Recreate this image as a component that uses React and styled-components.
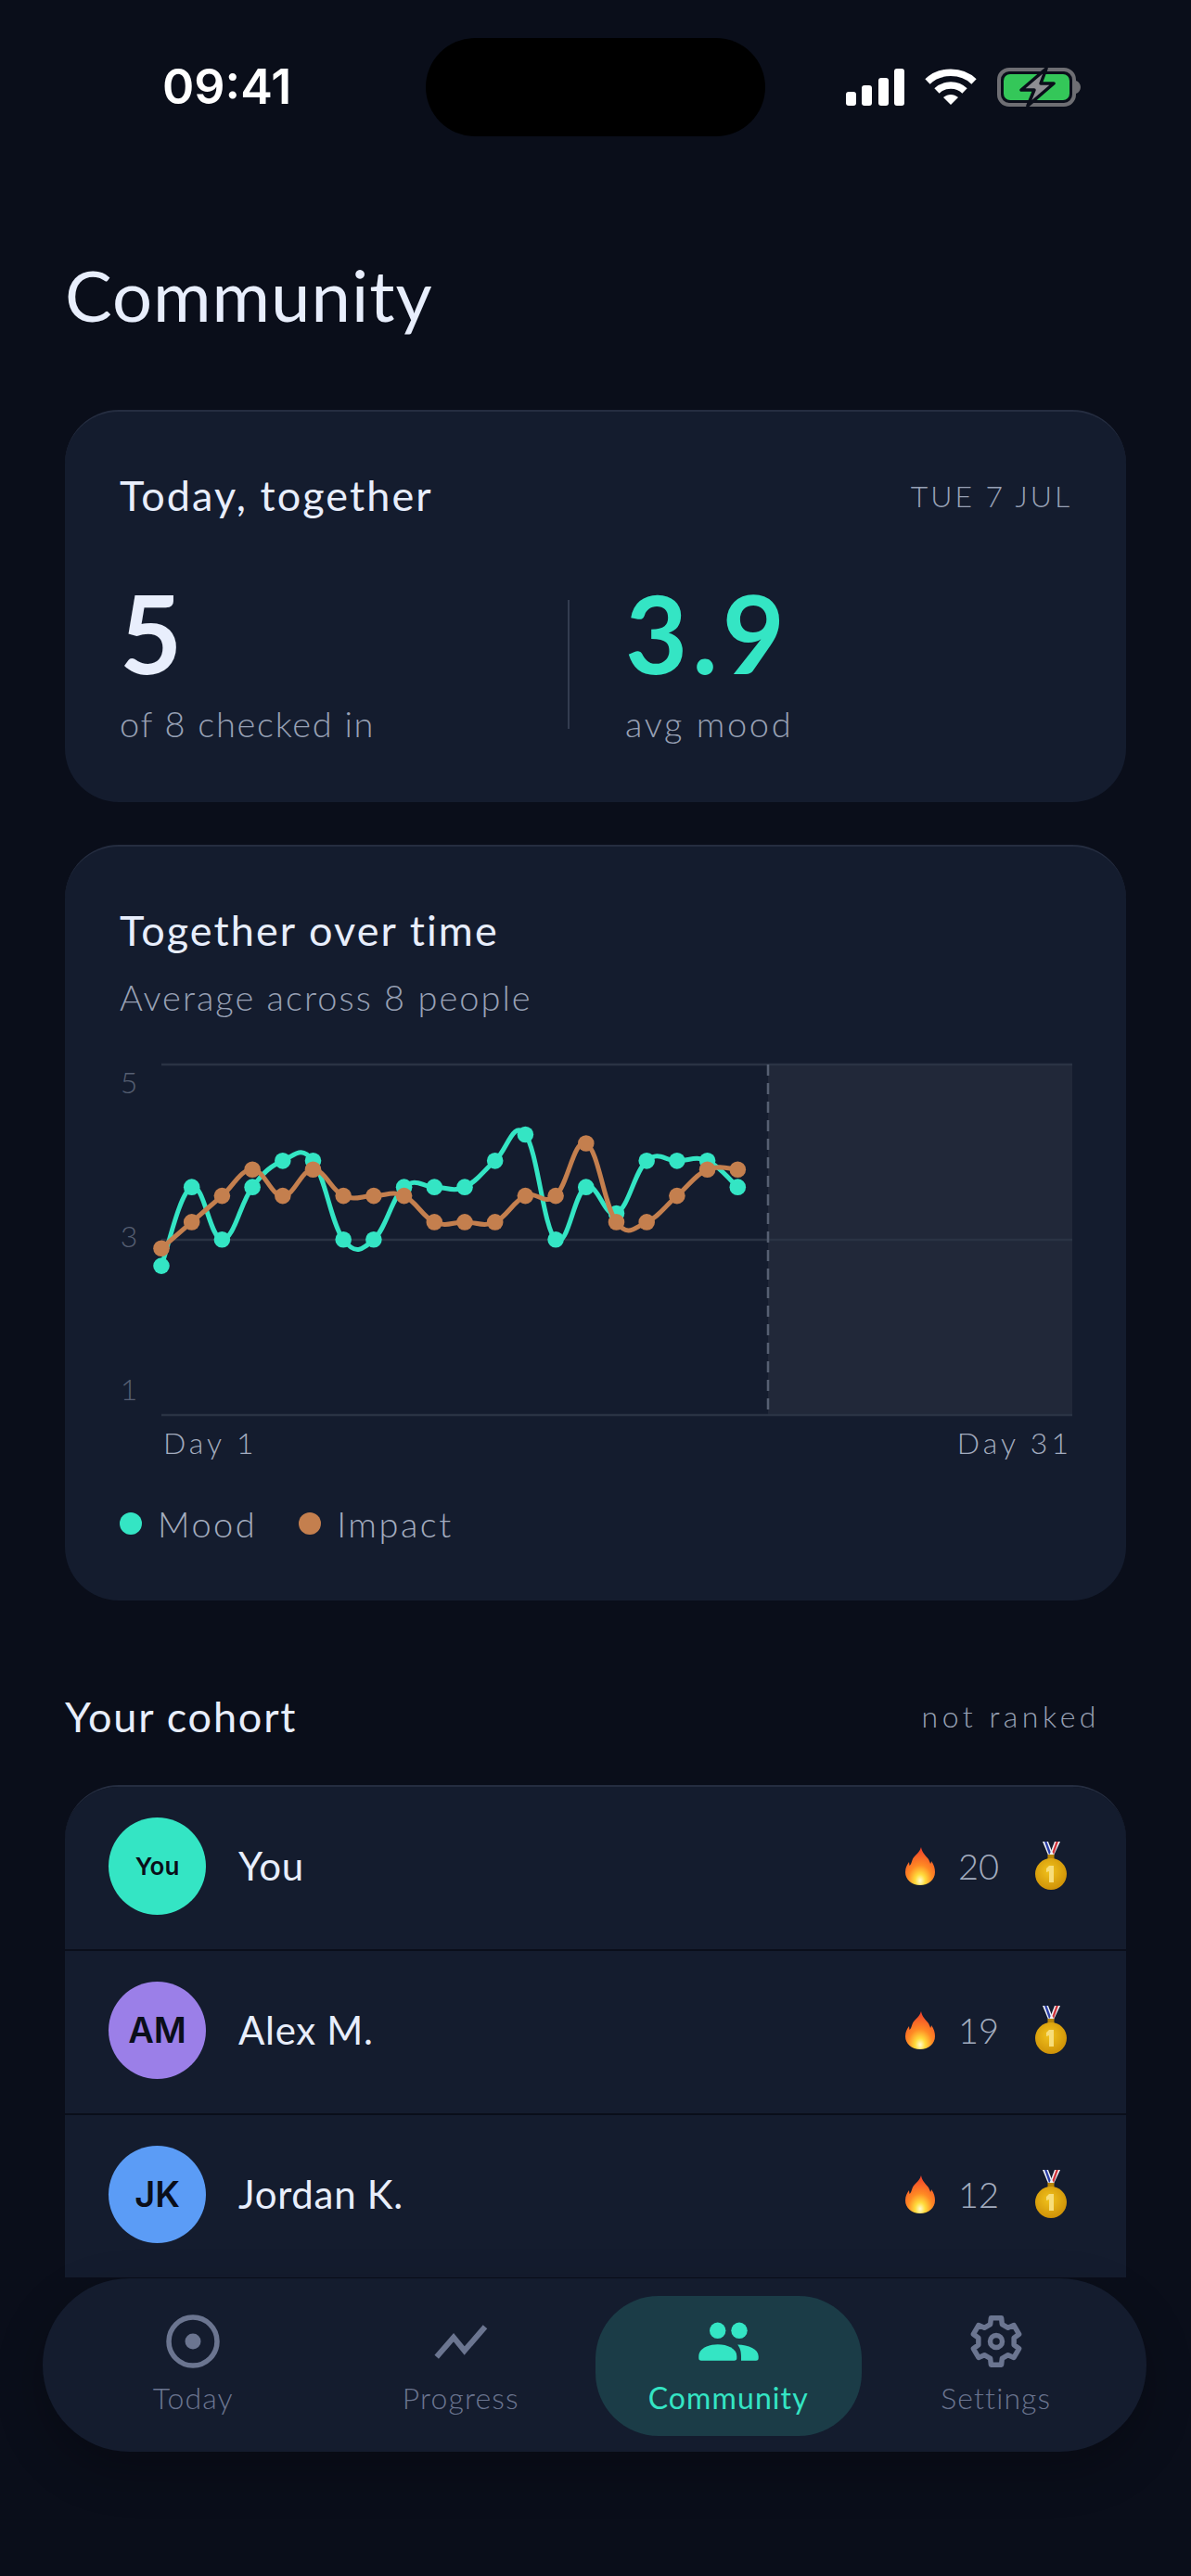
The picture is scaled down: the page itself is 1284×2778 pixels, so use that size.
import styled, { createGlobalStyle } from "styled-components";

const Global = createGlobalStyle`
  html, body { margin: 0; padding: 0; background: #0a0e1a; }
  * { box-sizing: border-box; }
`;

const TEAL = "#34e5c4";
const ORANGE = "#c47f4e";

const mood = [2.7, 3.6, 3.0, 3.6, 3.9, 3.9, 3.0, 3.0, 3.6, 3.6, 3.6, 3.9, 4.2, 3.0, 3.6, 3.3, 3.9, 3.9, 3.9, 3.6];
const impact = [2.9, 3.2, 3.5, 3.8, 3.5, 3.8, 3.5, 3.5, 3.5, 3.2, 3.2, 3.2, 3.5, 3.5, 4.1, 3.2, 3.2, 3.5, 3.8, 3.8];

const cohort = [
  { name: "You", initials: "You", color: TEAL, streak: 20, small: true },
  { name: "Alex M.", initials: "AM", color: "#9b7fe8", streak: 19 },
  { name: "Jordan K.", initials: "JK", color: "#5b9cf6", streak: 12 },
];

const px = (i) => 46 + i * 32.7;
const py = (v) => 4 + (5 - v) * 94.4;

// catmull-rom through the points, same feel as the chart lib
function linePath(values) {
  const pts = values.map((v, i) => [px(i), py(v)]);
  const k = 0.2;
  let d = `M${pts[0][0]} ${pts[0][1]}`;
  for (let i = 0; i < pts.length - 1; i++) {
    const p0 = pts[i - 1] || pts[i];
    const p1 = pts[i];
    const p2 = pts[i + 1];
    const p3 = pts[i + 2] || p2;
    const c1x = p1[0] + (p2[0] - p0[0]) * k;
    const c1y = p1[1] + (p2[1] - p0[1]) * k;
    const c2x = p2[0] - (p3[0] - p1[0]) * k;
    const c2y = p2[1] - (p3[1] - p1[1]) * k;
    d += ` C${c1x} ${c1y} ${c2x} ${c2y} ${p2[0]} ${p2[1]}`;
  }
  return d;
}

// six flat teeth, one pointing straight up
function gearPath() {
  const at = (r, deg) => {
    const a = (deg * Math.PI) / 180;
    return `${(29 + r * Math.cos(a)).toFixed(2)} ${(29 + r * Math.sin(a)).toFixed(2)}`;
  };
  let d = "";
  for (let k = 0; k < 6; k++) {
    const a = -90 + k * 60;
    d += `${k ? "L" : "M"}${at(19.5, a - 19)} L${at(25.8, a - 12.5)} L${at(25.8, a + 12.5)} L${at(19.5, a + 19)} `;
  }
  return d + "Z";
}

function Series({ values, color }) {
  return (
    <g>
      <path d={linePath(values)} fill="none" stroke={color} strokeWidth="5" />
      {values.map((v, i) => (
        <circle key={i} cx={px(i)} cy={py(v)} r="8.8" fill={color} />
      ))}
    </g>
  );
}

function Chart() {
  return (
    <ChartSvg width="1028" height="450" viewBox="0 0 1028 450">
      <rect x="700" y="4" width="328" height="377" fill="#212839" />
      <line x1="46" x2="1028" y1="4" y2="4" stroke="#2a3344" strokeWidth="2.5" />
      <line x1="46" x2="1028" y1="193" y2="193" stroke="#2a3344" strokeWidth="2.5" />
      <line x1="46" x2="1028" y1="382" y2="382" stroke="#2a3344" strokeWidth="2.5" />
      <line x1="700" x2="700" y1="4" y2="382" stroke="#565f72" strokeWidth="2.5" strokeDasharray="12 8" />
      <Series values={mood} color={TEAL} />
      <Series values={impact} color={ORANGE} />
      <AxisText x="11" y="35">5</AxisText>
      <AxisText x="11" y="201">3</AxisText>
      <AxisText x="11" y="366">1</AxisText>
      <DayText x="48" y="424">Day 1</DayText>
      <DayText x="1028" y="424" textAnchor="end">Day 31</DayText>
    </ChartSvg>
  );
}

function Flame() {
  return (
    <svg width="32" height="41" viewBox="0 0 32 41">
      <defs>
        <radialGradient id="flameFill" cx="0.5" cy="0.88" r="0.85">
          <stop offset="0" stopColor="#fffbd0" />
          <stop offset="0.2" stopColor="#ffdc3c" />
          <stop offset="0.48" stopColor="#ff8a24" />
          <stop offset="1" stopColor="#f0402a" />
        </radialGradient>
      </defs>
      <path
        d="M17 0c1 6 5 9 8 13 1 2 2 4 2 5 1-1 1-3 1-3 3 4 4 8 4 12 0 8-7 14-16 14S0 35 0 27c0-5 2-8 4-11l.5 4c1.500-1 2-3 3-6C9 9 15 7 17 0z"
        fill="url(#flameFill)"
      />
    </svg>
  );
}

function Medal() {
  return (
    <svg width="34" height="52" viewBox="0 0 34 52">
      <defs>
        <radialGradient id="medalFill" cx="0.45" cy="0.4" r="0.7">
          <stop offset="0" stopColor="#f2c31d" />
          <stop offset="1" stopColor="#c98a04" />
        </radialGradient>
      </defs>
      <path d="M8 0h6l5 13-4 4z" fill="#f1f3f8" />
      <path d="M10 0h2.500l4.500 12-2 2z" fill="#2b3fa6" />
      <path d="M27 0h-6l-5 13 3 4z" fill="#f1f3f8" />
      <path d="M25 0h-2.500l-4 11 1.500 3z" fill="#d0343a" />
      <rect x="13.500" y="14" width="7" height="5" fill="#b98608" />
      <circle cx="17" cy="35" r="17" fill="url(#medalFill)" />
      <path d="M15 26h5v18h-5V32l-3 1v-4z" fill="#f7dd7a" />
    </svg>
  );
}

function StatusIcons() {
  return (
    <StatusRight>
      <svg width="63" height="40" viewBox="0 0 63 40" fill="#fff">
        <rect x="0" y="25" width="11" height="15" rx="3" />
        <rect x="17" y="18" width="11" height="22" rx="3" />
        <rect x="35" y="10" width="11" height="30" rx="3" />
        <rect x="52" y="0" width="11" height="40" rx="3" />
      </svg>
      <svg width="56" height="40" viewBox="0 0 56 40" fill="none" stroke="#fff" strokeWidth="7.500">
        <path d="M3 14 C16 1 40 1 53 14" />
        <path d="M13 24 C21 16 35 16 43 24" />
        <path d="M20 31 L28 39 L36 31 C31 27 25 27 20 31Z" fill="#fff" stroke="none" />
      </svg>
      <svg width="90" height="42" viewBox="0 0 90 42">
        <rect x="2" y="2" width="81" height="38" rx="11" fill="none" stroke="#6e6e73" strokeWidth="4" />
        <rect x="7" y="7" width="71" height="28" rx="7" fill="#34c759" />
        <path d="M85 14c3 1 5 4 5 7s-2 6-5 7z" fill="#6e6e73" />
        <path d="M53 1 L26 24 H40 L33 41 L61 17 H47 Z" fill="#8e8e93" stroke="#0a0e1a" strokeWidth="3.500" strokeLinejoin="round" />
      </svg>
    </StatusRight>
  );
}

const navItems = [
  {
    label: "Today",
    icon: (
      <svg width="58" height="58" viewBox="0 0 58 58">
        <circle cx="29" cy="29" r="26" fill="none" stroke="currentColor" strokeWidth="5.500" />
        <circle cx="29" cy="29" r="8.500" fill="currentColor" />
      </svg>
    ),
  },
  {
    label: "Progress",
    icon: (
      <svg width="58" height="58" viewBox="0 0 58 58">
        <path d="M2.700 45.700 L21 24.700 L32.700 39 L55 13.300" fill="none" stroke="currentColor" strokeWidth="6" />
      </svg>
    ),
  },
  {
    label: "Community",
    active: true,
    icon: (
      <svg width="65" height="58" viewBox="0 0 65 58" fill="currentColor">
        <circle cx="20.700" cy="17.300" r="8.700" />
        <circle cx="44" cy="17.300" r="8.700" />
        <path d="M3 49.700 Q.3 49.700 .3 47 V45 C.3 37 10 32.300 20.800 32.300 C31.500 32.300 41.300 37 41.300 45 V47 Q41.300 49.700 38.600 49.700 Z" />
        <path d="M42.200 32.400 C54 32.600 64.700 37 64.700 45 V47 Q64.700 49.700 62 49.700 H46 V45 C46 39 44.500 35.500 42.200 32.400 Z" />
      </svg>
    ),
  },
  {
    label: "Settings",
    icon: (
      <svg width="58" height="58" viewBox="0 0 58 58" fill="none" stroke="currentColor" strokeWidth="5.500" strokeLinejoin="round">
        <path d={gearPath()} />
        <circle cx="29" cy="29" r="6.500" />
      </svg>
    ),
  },
];

export default function App() {
  return (
    <Screen>
      <Global />
      <StatusBar>
        <Clock>09:41</Clock>
        <Island />
        <StatusIcons />
      </StatusBar>
      <Scroll>
        <Title>Community</Title>
        <Card>
          <CardHead>
            <CardTitle>Today, together</CardTitle>
            <DateLabel>TUE 7 JUL</DateLabel>
          </CardHead>
          <Stats>
            <Stat>
              <BigNumber>5</BigNumber>
              <Muted>of 8 checked in</Muted>
            </Stat>
            <Divider />
            <Stat>
              <BigNumber accent>3.9</BigNumber>
              <Muted wide>avg mood</Muted>
            </Stat>
          </Stats>
        </Card>
        <ChartCard>
          <CardTitle>Together over time</CardTitle>
          <Subtitle>Average across 8 people</Subtitle>
          <Chart />
          <Legend>
            <LegendItem>
              <Dot color={TEAL} />
              Mood
            </LegendItem>
            <LegendItem>
              <Dot color={ORANGE} />
              Impact
            </LegendItem>
          </Legend>
        </ChartCard>
        <SectionHead>
          <SectionTitle>Your cohort</SectionTitle>
          <SectionNote>not ranked</SectionNote>
        </SectionHead>
        <List>
          {cohort.map((person) => (
            <Row key={person.name}>
              <Avatar color={person.color} small={person.small}>
                {person.initials}
              </Avatar>
              <Name>{person.name}</Name>
              <Flame />
              <Streak>{person.streak}</Streak>
              <Medal />
            </Row>
          ))}
        </List>
      </Scroll>
      <Nav>
        {navItems.map((item) => (
          <NavItem key={item.label} active={item.active}>
            {item.icon}
            <span>{item.label}</span>
          </NavItem>
        ))}
      </Nav>
    </Screen>
  );
}

const Screen = styled.div`
  width: 1284px;
  height: 2778px;
  display: flex;
  flex-direction: column;
  overflow: hidden;
  background: #0a0e1a;
  color: #e8eefc;
  font-family: Lato, "Noto Sans", sans-serif;
  font-weight: 300;
`;

const StatusBar = styled.div`
  height: 188px;
  flex: none;
  padding: 41px 119px 0 175px;
  display: flex;
  align-items: flex-start;
`;

const Clock = styled.div`
  width: 284px;
  flex: none;
  margin-top: 22px;
  font-family: Inter, sans-serif;
  font-size: 52px;
  line-height: 62px;
  font-weight: 600;
  color: #fff;
`;

const Island = styled.div`
  width: 366px;
  height: 106px;
  flex: none;
  border-radius: 53px;
  background: #000;
`;

const StatusRight = styled.div`
  display: flex;
  align-items: center;
  gap: 22px;
  height: 42px;
  margin: 32px 0 0 auto;
`;

const Scroll = styled.div`
  flex: 1;
  min-height: 0;
  overflow: hidden;
  padding: 0 70px;
`;

const Title = styled.h1`
  margin: 84px 0 0;
  height: 170px;
  font-size: 76px;
  line-height: 92px;
  font-weight: 400;
  letter-spacing: 1px;
  color: #e8eefc;
`;

const Card = styled.section`
  height: 423px;
  padding: 62px 58px 0 59px;
  background: #141c2e;
  border-radius: 58px;
  border-top: 2px solid #252d40;
`;

const ChartCard = styled(Card)`
  height: 815px;
  margin-top: 46px;
`;

const CardHead = styled.div`
  display: flex;
  justify-content: space-between;
  align-items: center;
`;

const CardTitle = styled.h2`
  margin: 0;
  font-size: 45px;
  line-height: 56px;
  font-weight: 400;
  letter-spacing: 2.1px;
  color: #e8eefc;
`;

const DateLabel = styled.span`
  font-size: 32px;
  letter-spacing: 2.9px;
  color: #98a1b5;
`;

const Stats = styled.div`
  display: flex;
  align-items: flex-start;
  margin-top: 61px;
`;

const Stat = styled.div`
  width: 483px;
  &:last-child { padding-left: 60px; }
`;

const BigNumber = styled.div`
  height: 120px;
  font-size: 116px;
  line-height: 120px;
  font-weight: 700;
  letter-spacing: 5px;
  color: ${(p) => (p.accent ? TEAL : "#e8eefc")};
`;

const Muted = styled.div`
  margin-top: 14px;
  font-size: 38px;
  line-height: 46px;
  letter-spacing: ${(p) => (p.wide ? "2.6px" : "1.7px")};
  color: #98a1b5;
`;

const Divider = styled.div`
  width: 2px;
  height: 139px;
  margin-top: 24px;
  background: #333c50;
`;

const Subtitle = styled.div`
  margin-top: 21px;
  font-size: 38px;
  line-height: 46px;
  letter-spacing: 2px;
  color: #98a1b5;
`;

const ChartSvg = styled.svg`
  display: block;
  margin: 46px 0 0 -1px;
  overflow: visible;
  max-width: none;
`;

const AxisText = styled.text`
  font-size: 32px;
  fill: #565f72;
  text-anchor: middle;
  font-family: Lato, sans-serif;
  font-weight: 300;
`;

const DayText = styled.text`
  font-size: 32px;
  fill: #a3acbf;
  letter-spacing: 4px;
  font-family: Lato, sans-serif;
  font-weight: 300;
`;

const Legend = styled.div`
  display: flex;
  gap: 45px;
  margin-top: 26px;
`;

const LegendItem = styled.div`
  display: flex;
  align-items: center;
  gap: 17px;
  font-size: 38px;
  line-height: 46px;
  letter-spacing: 2.5px;
  color: #a3acbf;
`;

const Dot = styled.span`
  width: 24px;
  height: 24px;
  border-radius: 50%;
  background: ${(p) => p.color};
`;

const SectionHead = styled.div`
  display: flex;
  justify-content: space-between;
  align-items: center;
  height: 199px;
  padding: 50px 28px 0 0;
`;

const SectionTitle = styled.h3`
  margin: 0;
  font-size: 45px;
  font-weight: 400;
  letter-spacing: 1.8px;
  color: #e8eefc;
`;

const SectionNote = styled.span`
  font-size: 32px;
  letter-spacing: 4.5px;
  color: #98a1b5;
`;

const List = styled.div`
  display: flex;
  flex-direction: column;
  gap: 2px;
  border-radius: 58px 58px 0 0;
  overflow: hidden;
  border-top: 2px solid #252d40;
`;

const Row = styled.div`
  height: 175px;
  flex: none;
  display: flex;
  align-items: center;
  padding: 0 64px 5px 47px;
  background: #141c2e;
`;

const Avatar = styled.div`
  width: 105px;
  height: 105px;
  border-radius: 50%;
  display: flex;
  align-items: center;
  justify-content: center;
  background: ${(p) => p.color};
  color: #0a0e1a;
  font-family: Inter, sans-serif;
  font-weight: 600;
  font-size: ${(p) => (p.small ? "26px" : "38px")};
`;

const Name = styled.div`
  flex: 1;
  margin-left: 35px;
  font-size: 42px;
  font-weight: 400;
  letter-spacing: 0.7px;
  color: #e8eefc;
`;

const Streak = styled.div`
  width: 42px;
  margin: 0 41px 0 25px;
  font-size: 38px;
  color: #a3acbf;
`;

const Nav = styled.nav`
  flex: none;
  height: 187px;
  margin: 0 48px 134px 46px;
  padding: 19px 19px 17px;
  border-radius: 94px;
  display: grid;
  grid-template-columns: repeat(4, 1fr);
  gap: 2px;
  background: #141c2e;
  box-shadow: 0 20px 50px rgba(0, 0, 0, 0.25);
`;

const NavItem = styled.div`
  display: flex;
  flex-direction: column;
  align-items: center;
  justify-content: flex-start;
  padding-top: 20px;
  gap: 11px;
  border-radius: 68px;
  font-size: 32px;
  line-height: 42px;
  letter-spacing: 1.1px;
  color: ${(p) => (p.active ? TEAL : "#6b7590")};
  background: ${(p) => (p.active ? "#1b3c47" : "transparent")};
  font-weight: ${(p) => (p.active ? 400 : 300)};
`;
